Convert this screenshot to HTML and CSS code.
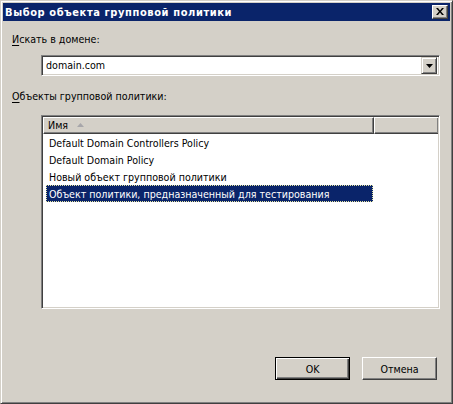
FILE: index.html
```html
<!DOCTYPE html>
<html lang="ru">
<head>
<meta charset="utf-8">
<title>Выбор объекта групповой политики</title>
<link rel="stylesheet" href="styles.css">
</head>
<body>
<div class="window">
  <div class="titlebar">
    <span class="title">Выбор объекта групповой политики</span>
    <span class="close">
      <svg width="8" height="7" viewBox="0 0 8 7"><path d="M0 0h2l2 2.5L6 0h2L5 3.5 8 7H6L4 4.5 2 7H0l3-3.5z" fill="#000"/></svg>
    </span>
  </div>
  <div class="content">
    <div class="label"><u>И</u>скать в домене:</div>
    <div class="combo">
      <span class="combo-text">domain.com</span>
      <span class="drop"><svg width="7" height="4" viewBox="0 0 7 4"><path d="M0 0h7L3.5 4z" fill="#000"/></svg></span>
    </div>
    <div class="label label2"><u>О</u>бъекты групповой политики:</div>
    <div class="list">
      <div class="header">
        <div class="col col1">Имя <svg class="sort" width="7" height="4" viewBox="0 0 7 4"><path d="M3.5 0L7 4H0z" fill="#a7a6aa"/></svg></div>
        <div class="col col2"></div>
      </div>
      <div class="row">Default Domain Controllers Policy</div>
      <div class="row">Default Domain Policy</div>
      <div class="row">Новый объект групповой политики</div>
      <div class="row selected">Объект политики, предназначенный для тестирования</div>
    </div>
    <div class="buttons">
      <button class="btn default"><span>OK</span></button>
      <button class="btn">Отмена</button>
    </div>
  </div>
</div>
</body>
</html>
```
FILE: styles.css
```css
* { box-sizing: border-box; }
html, body { margin: 0; padding: 0; }
body {
  background: #d4d0c8;
  font-family: "DejaVu Sans Condensed", "DejaVu Sans", sans-serif;
  font-stretch: condensed;
  font-size: 10.6px;
  color: #000;
}
.window {
  width: 453px;
  height: 404px;
  background: #d4d0c8;
  border: 1px solid;
  border-color: #d4d0c8 #404040 #404040 #d4d0c8;
  box-shadow: inset 1px 1px #ffffff, inset -1px -1px #808080;
  padding: 2px;
  display: flex;
  flex-direction: column;
}
.titlebar {
  height: 18px;
  background: #0a246a;
  display: flex;
  align-items: center;
  justify-content: space-between;
  padding: 0 2px 0 2px;
  flex: none;
}
.title {
  color: #fff;
  font-weight: bold;
  font-size: 11px;
  letter-spacing: 0.6px;
  line-height: 13px;
}
.close {
  width: 16px;
  height: 14px;
  background: #d4d0c8;
  border: 1px solid;
  border-color: #fff #404040 #404040 #fff;
  box-shadow: inset -1px -1px #808080;
  display: flex;
  align-items: center;
  justify-content: center;
  padding-right: 1px;
  padding-bottom: 1px;
}
.content {
  flex: 1;
  padding: 0 10px 0 9px;
  display: flex;
  flex-direction: column;
}
.label {
  line-height: 13px;
  margin-top: 12px;
}
.label u { text-decoration-thickness: 1px; text-underline-offset: 2px; }
.combo {
  margin-top: 9px;
  margin-left: 29px;
  height: 21px;
  background: #fff;
  border: 1px solid;
  border-color: #808080 #fff #fff #808080;
  box-shadow: inset 1px 1px #404040, inset -1px -1px #d4d0c8;
  display: flex;
  align-items: center;
  padding: 2px;
}
.combo-text {
  flex: 1;
  padding-left: 2px;
  line-height: 13px;
}
.drop {
  width: 16px;
  height: 17px;
  background: #d4d0c8;
  border: 1px solid;
  border-color: #d4d0c8 #404040 #404040 #d4d0c8;
  box-shadow: inset 1px 1px #fff, inset -1px -1px #808080;
  display: flex;
  align-items: center;
  justify-content: center;
}
.label2 { margin-top: 14px; }
.list {
  margin-top: 12px;
  margin-left: 29px;
  height: 194px;
  background: #fff;
  border: 1px solid;
  border-color: #808080 #fff #fff #808080;
  box-shadow: inset 1px 1px #404040, inset -1px -1px #d4d0c8;
  padding: 1px;
}
.header {
  display: flex;
  height: 17px;
}
.col {
  background: #d4d0c8;
  border-top: 1px solid #fff;
  border-left: 1px solid #fff;
  border-right: 1px solid #404040;
  border-bottom: 1px solid #404040;
  box-shadow: inset -1px -1px #808080;
  display: flex;
  align-items: center;
  line-height: 13px;
  padding-left: 4px;
}
.col1 { width: 331px; }
.col2 { flex: 1; border-right: none; }
.sort { margin-left: 9px; margin-top: -2px; }
.row {
  margin-left: 3px;
  width: 327px;
  height: 17px;
  line-height: 15px;
  padding: 1px 2px;
  border: 1px solid transparent;
  white-space: nowrap;
}
.row.selected {
  background: #0a246a;
  color: #fff;
  border: 1px dotted #e6e6a0;
}
.buttons {
  margin-top: auto;
  margin-bottom: 21px;
  display: flex;
  justify-content: flex-end;
  gap: 12px;
  padding-right: 3px;
}
.btn {
  width: 75px;
  height: 23px;
  font: inherit;
  color: #000;
  background: #d4d0c8;
  border: 1px solid;
  border-color: #fff #404040 #404040 #fff;
  box-shadow: inset -1px -1px #808080;
  padding: 0;
  margin: 0;
}
.btn.default {
  border: 1px solid #000;
  box-shadow: inset 1px 1px #fff, inset -1px -1px #404040, inset -2px -2px #808080;
}
```
